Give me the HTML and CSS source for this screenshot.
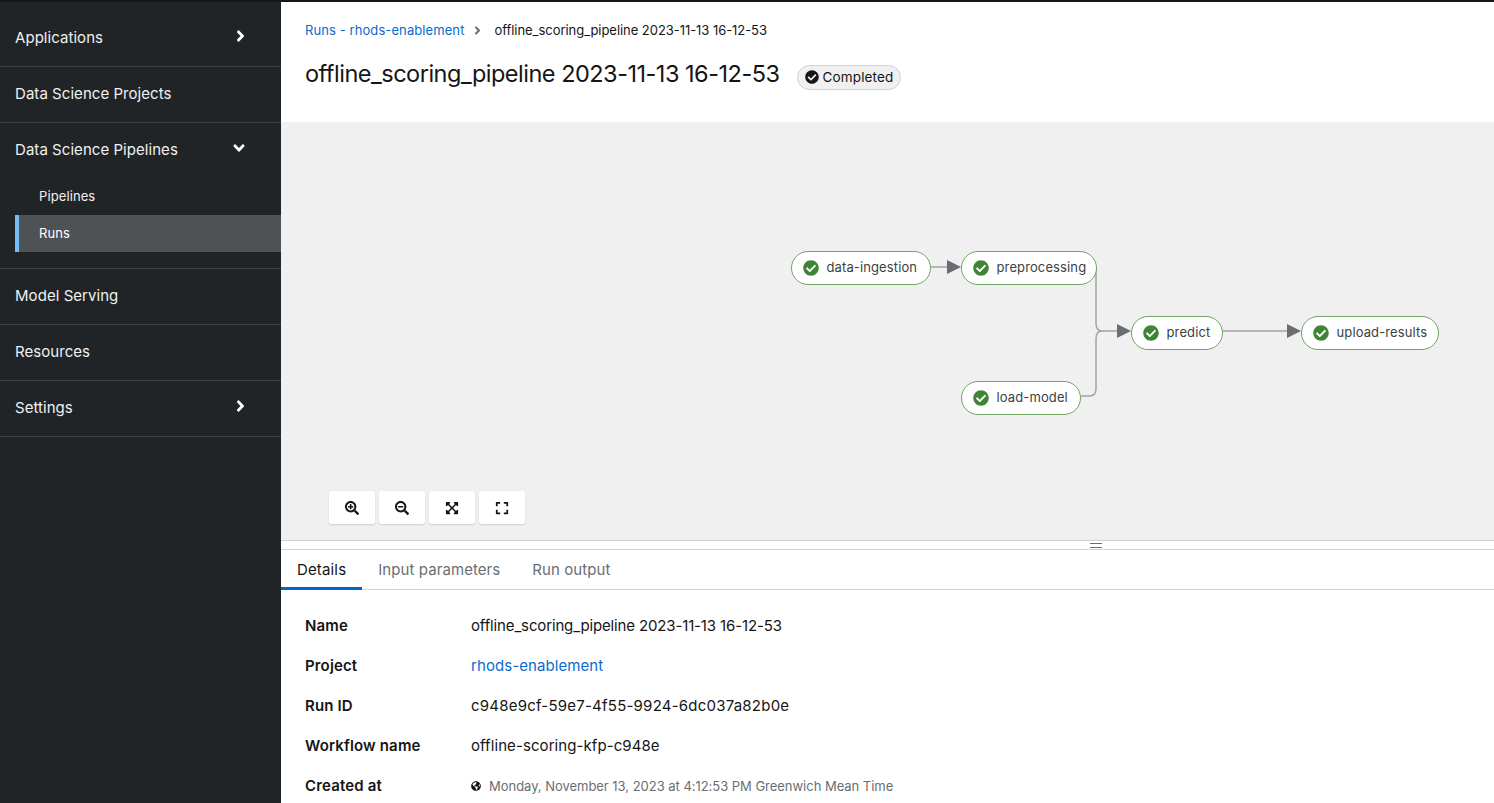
FILE: index.html
```html
<!DOCTYPE html>
<html>
<head>
<meta http-equiv="Content-Type" content="text/html; charset=utf-8"/>
<title>Run details</title>
<link rel="stylesheet" href="styles.css">
</head>
<body>
<svg class="defs" width="0" height="0">
  <symbol id="i-check" viewBox="0 0 512 512"><path d="M504 256c0 136.967-111.033 248-248 248S8 392.967 8 256 119.033 8 256 8s248 111.033 248 248zM227.314 387.314l184-184c6.248-6.248 6.248-16.379 0-22.627l-22.627-22.627c-6.248-6.249-16.379-6.249-22.628 0L216 308.118l-70.059-70.059c-6.248-6.248-16.379-6.248-22.628 0l-22.627 22.627c-6.248 6.248-6.248 16.379 0 22.627l104 104c6.249 6.25 16.379 6.25 22.628.001z"/></symbol>
  <symbol id="i-right" viewBox="0 0 256 512"><path d="M224.3 273l-136 136c-9.4 9.4-24.6 9.4-33.9 0l-22.6-22.6c-9.4-9.4-9.4-24.6 0-33.9l96.4-96.4-96.4-96.4c-9.4-9.4-9.4-24.6 0-33.9L54.3 103c9.4-9.4 24.6-9.4 33.9 0l136 136c9.5 9.4 9.5 24.6.1 34z"/></symbol>
  <symbol id="i-down" viewBox="0 0 320 512"><path d="M143 352.3L7 216.3c-9.4-9.4-9.4-24.6 0-33.9l22.6-22.6c9.4-9.4 24.6-9.4 33.9 0l96.4 96.4 96.4-96.4c9.4-9.4 24.6-9.4 33.9 0l22.6 22.6c9.4 9.4 9.4 24.6 0 33.9l-136 136c-9.2 9.4-24.4 9.4-33.8 0z"/></symbol>
</svg>

<div class="page">
  <nav class="sidebar">
    <div class="nav-item"><span>Applications</span><svg class="nav-arrow"><use href="#i-right"/></svg></div>
    <div class="nav-item"><span>Data Science Projects</span></div>
    <div class="nav-group">
      <div class="nav-item nav-head"><span>Data Science Pipelines</span><svg class="nav-arrow down"><use href="#i-down"/></svg></div>
      <div class="nav-sub">Pipelines</div>
      <div class="nav-sub current">Runs</div>
    </div>
    <div class="nav-item"><span>Model Serving</span></div>
    <div class="nav-item"><span>Resources</span></div>
    <div class="nav-item"><span>Settings</span><svg class="nav-arrow"><use href="#i-right"/></svg></div>
  </nav>

  <main class="content">
    <header class="run-header">
      <div class="breadcrumb">
        <a class="link">Runs - rhods-enablement</a>
        <svg class="crumb-sep"><use href="#i-right"/></svg>
        <span class="crumb-current">offline_scoring_pipeline 2023-11-13 16-12-53</span>
      </div>
      <div class="title-row">
        <h1>offline_scoring_pipeline 2023-11-13 16-12-53</h1>
        <span class="status"><svg><use href="#i-check"/></svg>Completed</span>
      </div>
    </header>

    <section class="graph">
      <svg class="edges" width="1213" height="418">
        <g fill="none" stroke="#a2a3a5" stroke-width="1.5">
          <path d="M650 145H666"/>
          <path d="M815 145V201Q815 209 821 209H836"/>
          <path d="M800 274H808Q815 274 815 267V217Q815 209 821 209"/>
          <path d="M942 209H1006"/>
        </g>
        <g fill="#6a6e73">
          <path d="M666 138L680 145L666 152Z"/>
          <path d="M836 202L850 209L836 216Z"/>
          <path d="M1006 202L1020 209L1006 216Z"/>
        </g>
      </svg>
      <div class="node n1"><svg><use href="#i-check"/></svg>data-ingestion</div>
      <div class="node n2"><svg><use href="#i-check"/></svg>preprocessing</div>
      <div class="node n3"><svg><use href="#i-check"/></svg>load-model</div>
      <div class="node n4"><svg><use href="#i-check"/></svg>predict</div>
      <div class="node n5"><svg><use href="#i-check"/></svg>upload-results</div>

      <div class="controls">
        <button class="ctl"><svg viewBox="0 0 512 512"><path d="M304 192v32c0 6.6-5.4 12-12 12h-56v56c0 6.6-5.4 12-12 12h-32c-6.6 0-12-5.4-12-12v-56h-56c-6.6 0-12-5.4-12-12v-32c0-6.6 5.4-12 12-12h56v-56c0-6.6 5.4-12 12-12h32c6.6 0 12 5.4 12 12v56h56c6.6 0 12 5.4 12 12zm201 284.7L476.7 505c-9.4 9.4-24.6 9.4-33.9 0L343 405.3c-4.5-4.5-7-10.6-7-17V372c-35.3 27.6-79.7 44-128 44C93.1 416 0 322.9 0 208S93.1 0 208 0s208 93.1 208 208c0 48.3-16.4 92.7-44 128h16.3c6.4 0 12.5 2.5 17 7l99.7 99.7c9.3 9.4 9.3 24.6 0 34zM344 208c0-75.2-60.8-136-136-136S72 132.8 72 208s60.8 136 136 136 136-60.8 136-136z"/></svg></button>
        <button class="ctl"><svg viewBox="0 0 512 512"><path d="M304 192v32c0 6.6-5.4 12-12 12H124c-6.6 0-12-5.4-12-12v-32c0-6.6 5.4-12 12-12h168c6.6 0 12 5.4 12 12zm201 284.7L476.7 505c-9.4 9.4-24.6 9.4-33.9 0L343 405.3c-4.5-4.5-7-10.6-7-17V372c-35.3 27.6-79.7 44-128 44C93.1 416 0 322.9 0 208S93.1 0 208 0s208 93.1 208 208c0 48.3-16.4 92.7-44 128h16.3c6.4 0 12.5 2.5 17 7l99.7 99.7c9.3 9.4 9.3 24.6 0 34zM344 208c0-75.2-60.8-136-136-136S72 132.8 72 208s60.8 136 136 136 136-60.8 136-136z"/></svg></button>
        <button class="ctl"><svg viewBox="0 0 448 512"><path d="M448 344v112a23.94 23.94 0 0 1-24 24H312c-21.39 0-32.09-25.9-17-41l36.2-36.2L224 295.6 116.77 402.9 153 439c15.09 15.1 4.39 41-17 41H24a23.94 23.94 0 0 1-24-24V344c0-21.4 25.89-32.1 41-17l36.19 36.2L184.46 256 77.18 148.7 41 185c-15.1 15.1-41 4.4-41-17V56a23.94 23.94 0 0 1 24-24h112c21.39 0 32.09 25.9 17 41l-36.2 36.2L224 216.4l107.23-107.3L295 73c-15.09-15.1-4.39-41 17-41h112a23.94 23.94 0 0 1 24 24v112c0 21.4-25.89 32.1-41 17l-36.19-36.2L263.54 256l107.28 107.3L407 327.1c15.1-15.2 41-4.5 41 16.9z"/></svg></button>
        <button class="ctl"><svg viewBox="0 0 448 512"><path d="M0 180V56c0-13.3 10.7-24 24-24h124c6.6 0 12 5.4 12 12v40c0 6.6-5.4 12-12 12H64v84c0 6.6-5.4 12-12 12H12c-6.6 0-12-5.4-12-12zM288 44v40c0 6.6 5.4 12 12 12h84v84c0 6.6 5.4 12 12 12h40c6.6 0 12-5.4 12-12V56c0-13.3-10.7-24-24-24H300c-6.6 0-12 5.4-12 12zm148 276h-40c-6.6 0-12 5.4-12 12v84h-84c-6.6 0-12 5.4-12 12v40c0 6.6 5.4 12 12 12h124c13.3 0 24-10.7 24-24V332c0-6.6-5.4-12-12-12zM160 468v-40c0-6.6-5.4-12-12-12H64v-84c0-6.6-5.4-12-12-12H12c-6.6 0-12 5.4-12 12v124c0 13.3 10.7 24 24 24h124c6.6 0 12-5.4 12-12z"/></svg></button>
      </div>
    </section>

    <div class="splitter"><span class="grip"></span></div>

    <div class="tabs">
      <div class="tab active">Details</div>
      <div class="tab">Input parameters</div>
      <div class="tab">Run output</div>
    </div>

    <dl class="details">
      <dt>Name</dt><dd class="tight">offline_scoring_pipeline 2023-11-13 16-12-53</dd>
      <dt>Project</dt><dd><a class="link">rhods-enablement</a></dd>
      <dt>Run ID</dt><dd class="wide">c948e9cf-59e7-4f55-9924-6dc037a82b0e</dd>
      <dt>Workflow name</dt><dd>offline-scoring-kfp-c948e</dd>
      <dt>Created at</dt>
      <dd class="created">
        <svg viewBox="0 0 496 512"><path d="M248 8C111.03 8 0 119.03 0 256s111.03 248 248 248 248-111.03 248-248S384.97 8 248 8zm82.29 357.6c-3.9 3.88-7.99 7.95-11.31 11.28-2.99 3-5.1 6.7-6.17 10.71-1.51 5.66-2.73 11.38-4.77 16.87l-17.39 46.85c-13.76 3-28 4.69-42.65 4.69v-27.38c1.69-12.62-7.64-36.26-22.63-51.25-6-6-9.37-14.14-9.37-22.63v-32.01c0-11.64-6.27-22.34-16.46-27.97-14.37-7.95-34.81-19.06-48.81-26.11-11.48-5.78-22.1-13.14-31.65-21.75l-.8-.72a114.792 114.792 0 0 1-18.06-20.74c-9.38-13.77-24.66-36.42-34.59-51.14 20.47-45.5 57.36-82.04 103.2-101.89l24.01 12.01C203.48 89.74 216 82.01 216 70.11v-11.3c7.99-1.29 16.12-2.11 24.39-2.42l28.3 28.3c6.25 6.25 6.25 16.38 0 22.63L264 112l-10.34 10.34c-3.12 3.12-3.12 8.19 0 11.31l4.69 4.69c3.12 3.12 3.12 8.19 0 11.31l-8 8a8.008 8.008 0 0 1-5.66 2.34h-8.99c-2.08 0-4.08.81-5.58 2.27l-9.92 9.65a8.008 8.008 0 0 0-1.58 9.31l15.59 31.19c2.66 5.32-1.21 11.58-7.15 11.58h-5.64c-1.93 0-3.79-.7-5.24-1.96l-9.28-8.06a16.017 16.017 0 0 0-15.55-3.1l-31.17 10.39a11.95 11.95 0 0 0-8.17 11.34c0 4.53 2.56 8.66 6.61 10.69l11.08 5.54c9.41 4.71 19.79 7.16 30.31 7.16s22.59 27.29 32 32h66.75c8.49 0 16.62 3.37 22.63 9.37l13.69 13.69a30.503 30.503 0 0 1 8.93 21.57 46.536 46.536 0 0 1-13.72 32.98zM417 274.25c-5.79-1.45-10.84-5-14.15-9.97l-17.98-26.97a23.97 23.97 0 0 1 0-26.62l19.59-29.38c2.32-3.47 5.5-6.29 9.24-8.15l12.98-6.49C440.2 193.59 448 223.87 448 256c0 8.67-.74 17.16-1.82 25.54L417 274.25z"/></svg>
        Monday, November 13, 2023 at 4:12:53 PM Greenwich Mean Time
      </dd>
    </dl>
  </main>
</div>
</body>
</html>
```

FILE: styles.css
```css
html, body {
  margin: 0;
  height: 100%;
  overflow: hidden;
}

body {
  font-family: "Inter", "Noto Sans", sans-serif;
  font-size: 16px;
  color: #151515;
  background-color: white;
}

.defs {
  display: block;
  height: 0;
}

.page {
  display: flex;
  height: 803px;
  box-sizing: border-box;
  border-top: 2px solid #151515;
}

.link {
  color: #0a6ad0;
}

/* sidebar */
.sidebar {
  width: 281px;
  flex: none;
  padding-top: 9px;
  background-color: #212427;
  color: #f0f0f0;
  font-size: 15px;
  letter-spacing: 0.05px;
}

.nav-item, .nav-group {
  border-bottom: 1px solid #3c3f42;
}

.nav-item {
  height: 56px;
  box-sizing: border-box;
  display: flex;
  align-items: center;
  justify-content: space-between;
  padding: 0 36px 2px 15px;
}

.nav-group .nav-head {
  height: 55px;
  border-bottom: 0;
}

.nav-arrow {
  width: 9px;
  height: 18px;
  fill: #fff;
  margin-top: -3px;
}

.nav-arrow.down {
  width: 14px;
  margin-right: -1px;
}

.nav-group {
  padding-bottom: 16px;
}

.nav-sub {
  height: 37px;
  line-height: 37px;
  margin-left: 15px;
  padding-left: 24px;
  font-size: 13px;
  letter-spacing: 0.1px;
}

.nav-sub.current {
  padding-left: 20px;
  border-left: 4px solid #73bcf7;
  background-color: #4f5255;
  color: #fff;
}

/* header */
.content {
  flex: 1;
  min-width: 0;
  display: flex;
  flex-direction: column;
}

.run-header {
  height: 120px;
  flex: none;
  box-sizing: border-box;
  padding: 18px 24px 0;
}

.breadcrumb {
  display: flex;
  align-items: center;
  height: 20px;
  font-size: 13px;
}

.breadcrumb .link {
  letter-spacing: 0.09px;
}

.crumb-current {
  letter-spacing: -0.05px;
}

.crumb-sep {
  width: 7px;
  height: 13px;
  margin: 0 14px 0 9px;
  fill: #6a6e73;
}

.title-row {
  display: flex;
  align-items: center;
  margin-top: 18px;
}

h1 {
  margin: 0;
  font-size: 23.5px;
  font-weight: 400;
  line-height: 32px;
  letter-spacing: -0.5px;
}

.status {
  display: inline-flex;
  align-items: center;
  gap: 4px;
  height: 25px;
  box-sizing: border-box;
  margin: 6px 0 0 17px;
  padding: 0 7px;
  border: 1px solid #d2d2d2;
  border-radius: 13px;
  background-color: #f0f0f0;
  font-size: 13.5px;
  letter-spacing: 0.15px;
}

.status svg {
  width: 14px;
  height: 14px;
  fill: #151515;
}

/* graph */
.graph {
  position: relative;
  height: 418px;
  flex: none;
  background-color: #f0f0f0;
}

.edges {
  position: absolute;
  left: 0;
  top: 0;
}

.node {
  position: absolute;
  height: 34px;
  box-sizing: border-box;
  display: flex;
  align-items: center;
  gap: 7.5px;
  padding: 0 0 2px 11px;
  border: 1px solid #6fa565;
  border-radius: 17px;
  background-color: #fff;
  font-size: 13px;
  letter-spacing: 0.12px;
  color: #3c3f42;
}

.node svg {
  width: 16px;
  height: 16px;
  margin-top: 2px;
  fill: #3e8635;
  flex: none;
}

.n1 { left: 510px; top: 129px; width: 140px; }
.n2 { left: 680px; top: 129px; width: 136px; }
.n3 { left: 680px; top: 259px; width: 120px; }
.n4 { left: 850px; top: 194px; width: 92px; }
.n5 { left: 1020px; top: 194px; width: 138px; }

.controls {
  position: absolute;
  left: 48px;
  top: 369px;
  display: flex;
  gap: 4px;
}

.ctl {
  width: 46px;
  height: 33px;
  padding: 0;
  border: 0;
  border-radius: 3px;
  background-color: #fff;
  box-shadow: 0 1px 2px rgba(3, 3, 3, 0.14);
  display: flex;
  align-items: center;
  justify-content: center;
}

.ctl svg {
  width: 14px;
  height: 14px;
  fill: #151515;
}

/* splitter and tabs */
.splitter {
  height: 8px;
  flex: none;
  border-top: 1px solid #d2d2d2;
  border-bottom: 1px solid #d2d2d2;
  display: flex;
  align-items: center;
  padding-left: 809px;
}

.grip {
  width: 12px;
  height: 3px;
  border-top: 1px solid #6a6e73;
  border-bottom: 1px solid #6a6e73;
}

.tabs {
  display: flex;
  height: 40px;
  flex: none;
  box-sizing: border-box;
  border-bottom: 1px solid #d2d2d2;
}

.tab {
  padding: 0 16px;
  line-height: 39px;
  font-size: 15px;
  letter-spacing: 0.08px;
  color: #6a6e73;
  height: 39px;
}

.tab.active {
  color: #151515;
  letter-spacing: 0.15px;
  box-shadow: inset 0 -3px 0 #06c;
  height: 40px;
}

/* details list */
.details {
  display: grid;
  grid-template-columns: 166px 1fr;
  grid-auto-rows: 40px;
  align-items: center;
  margin: 15px 0 0;
  padding: 0 24px;
  font-size: 15px;
  letter-spacing: 0.08px;
}

.details dt {
  font-weight: 600;
  letter-spacing: 0.15px;
}

.details dd {
  margin: 0;
}

.details .tight {
  letter-spacing: -0.14px;
}

.details .wide {
  letter-spacing: 0.22px;
}

.details .created {
  display: flex;
  align-items: center;
  gap: 8px;
  padding-top: 2px;
  font-size: 13px;
  letter-spacing: -0.03px;
  color: #6a6e73;
}

.created svg {
  width: 10px;
  height: 10px;
  fill: #151515;
}
```
